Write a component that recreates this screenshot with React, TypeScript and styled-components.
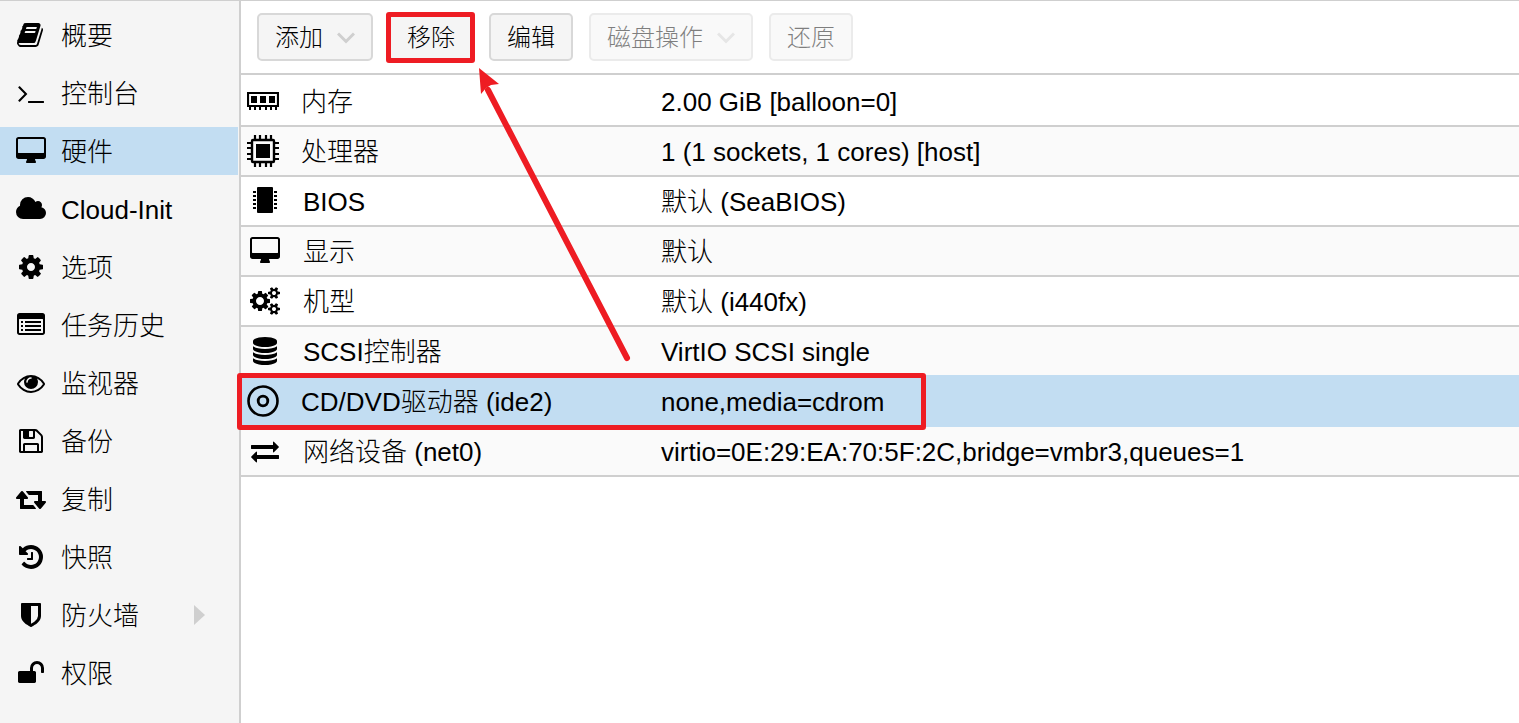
import React from "react";
import styled, { createGlobalStyle, css } from "styled-components";

const RED = "#ee1c23";
const LINE = "#cfcfcf";
const SELECTED = "#c2ddf2";

const GlobalStyle = createGlobalStyle`
  *, *::before, *::after { box-sizing: border-box; }
  body {
    margin: 0;
    background: #fff;
    color: #000;
    font-family: "Liberation Sans", "Noto Sans CJK SC", sans-serif;
    font-weight: 300;
    font-size: 26px;
    line-height: 32px;
  }
`;

const Page = styled.div`
  display: flex;
  min-height: 100vh;
  border-top: 1px solid ${LINE};
`;

const Sidebar = styled.nav`
  flex: 0 0 241px;
  padding: 10px 1px 10px 0;
  background: #f5f5f5;
  border-right: 2px solid ${LINE};
`;

const NavList = styled.ul`
  display: flex;
  flex-direction: column;
  gap: 10px;
  margin: 0;
  padding: 0;
  list-style: none;
`;

const NavLink = styled.a<{ $active?: boolean }>`
  display: flex;
  align-items: center;
  gap: 15px;
  height: 48px;
  padding: 0 33px 0 16px;
  color: inherit;
  text-decoration: none;
  background: ${(p) => (p.$active ? SELECTED : "transparent")};
`;

const NavIcon = styled.span`
  display: flex;
  justify-content: center;
  flex: 0 0 30px;
`;

const NavText = styled.span`
  flex: 1;
  padding-top: 2px;
`;

const Main = styled.main`
  position: relative;
  flex: 1;
  min-width: 0;
`;

const Toolbar = styled.div`
  display: flex;
  gap: 16px;
  padding: 12px 16px;
  border-bottom: 2px solid ${LINE};
`;

const ToolButton = styled.button`
  position: relative;
  display: flex;
  align-items: center;
  gap: 14px;
  height: 48px;
  padding: 2px 16px 0;
  border: 2px solid #d8d8d8;
  border-radius: 5px;
  background: #f5f5f5;
  color: #000;
  font: inherit;
  font-size: 24px;
  white-space: nowrap;
  &:disabled { opacity: 0.5; }
`;

const marker = css`
  position: absolute;
  z-index: 1;
  border: 5px solid ${RED};
  border-radius: 3px;
  pointer-events: none;
`;

const ButtonMarker = styled.span`
  ${marker}
  inset: -3px -4px -4px -5px;
`;

const RowMarker = styled.span`
  ${marker}
  top: -4px;
  left: -4px;
  width: 689px;
  height: 57px;
`;

const Arrow = styled.svg`
  position: absolute;
  left: 230px;
  top: 60px;
  pointer-events: none;
`;

const Grid = styled.table`
  width: 100%;
  padding-top: 2px;
  border-spacing: 0;
  table-layout: fixed;
`;

const NameColumn = styled.col`
  width: 420px;
`;

const Row = styled.tr<{ $selected?: boolean; $beforeSelected?: boolean }>`
  position: relative;
  &:nth-child(even) { background: #fafafa; }
  > * {
    height: 50px;
    padding: 0;
    border-bottom: 2px solid ${(p) => (p.$selected || p.$beforeSelected ? SELECTED : LINE)};
    font-weight: inherit;
    text-align: left;
    white-space: nowrap;
  }
  > td { padding-top: 2px; }
  && { ${(p) => p.$selected && `background: ${SELECTED};`} }
`;

const NameCell = styled.div`
  display: flex;
  align-items: center;
  gap: 20px;
  padding-left: 6px;
`;

const DeviceName = styled.span`
  padding-top: 2px;
`;

const DeviceIcon = styled.span<{ $custom?: boolean }>`
  display: flex;
  align-items: center;
  justify-content: ${(p) => (p.$custom ? "flex-start" : "center")};
  flex: 0 0 ${(p) => (p.$custom ? 34 : 36)}px;
`;

const glyphs = {
  book: { x: 0, w: 1792, d: "M1639 478q40 57 18 129l-275 906q-19 64-76.500 107.500t-122.500 43.500h-923q-77 0-148.500-53.500t-99.500-131.500q-24-67-2-127 0-4 3-27t4-37q1-8-3-21.500t-3-19.500q2-11 8-21t16.500-23.500 16.500-23.500q23-38 45-91.500t30-91.500q3-10 .5-30t-.5-28q3-11 17-28t17-23q21-36 42-92t25-90q1-9-2.500-32t.5-28q4-13 22-30.500t22-22.500q19-26 42.500-84.500t27.500-96.500q1-8-3-25.500t-2-26.500q2-8 9-18t18-23 17-21q8-12 16.500-30.500t15-35 16-36 19.500-32 26.500-23.500 36-11.500 47.500 5.500l-1 3q38-9 51-9h761q74 0 114 56t18 130l-274 906q-36 119-71.500 153.500t-128.500 34.500h-869q-27 0-38 15-11 16-1 43 24 70 144 70h923q29 0 56-15.500t35-41.500l300-987q7-22 5-57 38 15 59 43zm-1064 2q-4 13 2 22.500t20 9.500h608q13 0 25.500-9.500t16.500-22.500l21-64q4-13-2-22.500t-20-9.500h-608q-13 0-25.500 9.500t-16.500 22.500zm-83 256q-4 13 2 22.500t20 9.500h608q13 0 25.500-9.500t16.500-22.500l21-64q4-13-2-22.500t-20-9.500h-608q-13 0-25.500 9.500t-16.500 22.500z" },
  terminal: { x: 0, w: 1792, d: "M649 983l-466 466q-10 10-23 10t-23-10l-50-50q-10-10-10-23t10-23l393-393-393-393q-10-10-10-23t10-23l50-50q10-10 23-10t23 10l466 466q10 10 10 23t-10 23zm1079 457v64q0 14-9 23t-23 9h-960q-14 0-23-9t-9-23v-64q0-14 9-23t23-9h960q14 0 23 9t9 23z" },
  desktop: { x: -64, w: 1920, d: "M1728 992v-832q0-13-9.500-22.500t-22.500-9.500h-1600q-13 0-22.500 9.500t-9.500 22.500v832q0 13 9.500 22.500t22.500 9.500h1600q13 0 22.500-9.500t9.500-22.500zm128-832v1088q0 66-47 113t-113 47h-544q0 37 16 77.500t32 71 16 43.500q0 26-19 45t-45 19h-512q-26 0-45-19t-19-45q0-14 16-44t32-70 16-78h-544q-66 0-113-47t-47-113v-1088q0-66 47-113t113-47h1600q66 0 113 47t47 113z" },
  cloud: { x: 64, w: 1920, d: "M1984 1152q0 159-112.500 271.500t-271.500 112.500h-1088q-185 0-316.500-131.500t-131.500-316.500q0-132 71-241.500t187-163.500q-2-28-2-43 0-212 150-362t362-150q158 0 286.500 88t187.500 230q70-62 166-62 106 0 181 75t75 181q0 75-41 138 129 30 213 134.500t84 239.500z" },
  cog: { x: 0, w: 1792, d: "M1152 896q0-106-75-181t-181-75-181 75-75 181 75 181 181 75 181-75 75-181zm512-109v222q0 12-8 23t-20 13l-185 28q-19 54-39 91 35 50 107 138 10 12 10 25t-9 23q-27 37-99 108t-94 71q-12 0-26-9l-138-108q-44 23-91 38-16 136-29 186-7 28-36 28h-222q-14 0-24.500-8.500t-11.500-21.500l-28-184q-49-16-90-37l-141 107q-10 9-25 9-14 0-25-11-126-114-165-168-7-10-7-23 0-12 8-23 15-21 51-66.500t54-70.500q-27-50-41-99l-183-27q-13-2-21-12.500t-8-23.500v-222q0-12 8-23t19-13l186-28q14-46 39-92-40-57-107-138-10-12-10-24 0-10 9-23 26-36 98.500-107.500t94.500-71.500q13 0 26 10l138 107q44-23 91-38 16-136 29-186 7-28 36-28h222q14 0 24.500 8.500t11.500 21.500l28 184q49 16 90 37l142-107q9-9 24-9 13 0 25 10 129 119 165 170 7 8 7 22 0 12-8 23-15 21-51 66.500t-54 70.500q26 50 41 98l183 28q13 2 21 12.500t8 23.500z" },
  list: { x: 0, w: 1792, d: "M256 1152h128v128h-128zM256 896h128v128h-128zM256 640h128v128h-128zM512 1152h1024v128h-1024zM512 896h1024v128h-1024zM512 640h1024v128h-1024zM1664 1376v-832q0-13-9.500-22.500t-22.500-9.500h-1472q-13 0-22.500 9.500t-9.500 22.500v832q0 13 9.500 22.500t22.500 9.500h1472q13 0 22.500-9.500t9.500-22.500zm128-1088v1088q0 66-47 113t-113 47h-1472q-66 0-113-47t-47-113v-1088q0-66 47-113t113-47h1472q66 0 113 47t47 113z" },
  eye: { x: 0, w: 1792, d: "M1664 960q-152-236-381-353 61 104 61 225 0 185-131.500 316.500t-316.500 131.500-316.500-131.500-131.500-316.500q0-121 61-225-229 117-381 353 133 205 333.500 326.500t434.500 121.500 434.500-121.500 333.500-326.500zm-720-384q0-20-14-34t-34-14q-125 0-214.500 89.500t-89.500 214.500q0 20 14 34t34 14 34-14 14-34q0-86 61-147t147-61q20 0 34-14t14-34zm848 384q0 34-20 69-140 230-376.500 368.500t-499.500 138.500-499.500-139-376.500-368q-20-35-20-69t20-69q140-229 376.500-368t499.500-139 499.500 139 376.500 368q20 35 20 69z" },
  floppy: { x: 0, w: 1792, d: "M512 1536h768v-384h-768v384zm896 0h128v-896q0-14-10-38.500t-20-34.500l-281-281q-10-10-34-20t-39-10v416q0 40-28 68t-68 28h-576q-40 0-68-28t-28-68v-416h-128v1280h128v-416q0-40 28-68t68-28h832q40 0 68 28t28 68v416zm-384-928v-320q0-13-9.500-22.500t-22.500-9.500h-192q-13 0-22.500 9.500t-9.500 22.500v320q0 13 9.500 22.500t22.500 9.500h192q13 0 22.500-9.500t9.500-22.500zm640 32v928q0 40-28 68t-68 28h-1344q-40 0-68-28t-28-68v-1344q0-40 28-68t68-28h928q40 0 88 20t76 48l280 280q28 28 48 76t20 88z" },
  retweet: { x: 0, w: 1920, d: "M1280 1504q0 13-9.500 22.500t-22.500 9.500h-960q-8 0-13.500-2t-9-7-5.500-8-3-11.500-1-11.500v-600h-192q-26 0-45-19t-19-45q0-24 15-41l320-384q19-22 49-22t49 22l320 384q15 17 15 41 0 26-19 45t-45 19h-192v384h576q16 0 25 11l160 192q7 10 7 21zm640-416q0 24-15 41l-320 384q-20 23-49 23t-49-23l-320-384q-15-17-15-41 0-26 19-45t45-19h192v-384h-576q-16 0-25-12l-160-192q-7-9-7-20 0-13 9.500-22.500t22.500-9.500h960q8 0 13.500 2t9 7 5.500 8 3 11.500 1 11.500v600h192q26 0 45 19t19 45z" },
  history: { x: 0, w: 1792, d: "M1664 896q0 156-61 298t-164 245-245 164-298 61q-172 0-327-72.500t-264-204.500q-7-10-6.500-22.500t8.500-20.500l137-138q10-9 25-9 16 2 23 12 73 95 179 147t225 52q104 0 198.500-40.500t163.500-109.500 109.500-163.500 40.500-198.500-40.500-198.500-109.500-163.500-163.500-109.500-198.500-40.500q-98 0-188 35.500t-160 101.500l137 138q31 30 14 69-17 40-59 40h-448q-26 0-45-19t-19-45v-448q0-42 40-59 39-17 69 14l130 129q107-101 244.500-156.500t284.500-55.500q156 0 298 61t245 164 164 245 61 298zm-640-288v448q0 14-9 23t-23 9h-320q-14 0-23-9t-9-23v-64q0-14 9-23t23-9h224v-352q0-14 9-23t23-9h64q14 0 23 9t9 23z" },
  shield: { x: 0, w: 1792, d: "M1344 960v-640h-448v1137q119-63 213-137 235-184 235-360zm192-768v768q0 86-33.500 170.500t-83 150-118 127.500-126.500 103-121 77.500-89.500 49.500-42.500 20q-12 6-26 6t-26-6q-16-7-42.500-20t-89.500-49.500-121-77.500-126.500-103-118-127.500-83-150-33.500-170.500v-768q0-26 19-45t45-19h1152q26 0 45 19t19 45z" },
  unlock: { x: 0, w: 1792, d: "M1728 576v256q0 26-19 45t-45 19h-64q-26 0-45-19t-19-45v-256q0-106-75-181t-181-75-181 75-75 181v192h96q40 0 68 28t28 68v576q0 40-28 68t-68 28h-960q-40 0-68-28t-28-68v-576q0-40 28-68t68-28h672v-192q0-185 131.500-316.500t316.500-131.500 316.500 131.500 131.500 316.500z" },
  cogs: { x: -64, w: 1920, d: "M832 896q0-106-75-181t-181-75-181 75-75 181 75 181 181 75 181-75 75-181zm768 512q0-52-38-90t-90-38-90 38-38 90q0 53 37.500 90.500t90.500 37.500 90.500-37.500 37.500-90.500zm0-1024q0-52-38-90t-90-38-90 38-38 90q0 53 37.500 90.500t90.500 37.500 90.500-37.500 37.500-90.500zm-384 421v185q0 10-7 19.500t-16 10.500l-155 24q-11 35-32 76 34 48 90 115 7 11 7 20 0 12-7 19-23 30-82.500 89.500t-78.500 59.500q-11 0-21-7l-115-90q-37 19-77 31-11 108-23 155-7 24-30 24h-186q-11 0-20-7.500t-10-17.500l-23-153q-34-10-75-31l-118 89q-7 7-20 7-11 0-21-8-144-133-144-160 0-9 7-19 10-14 41-53t47-61q-23-44-35-82l-152-24q-10-1-17-9.500t-7-19.500v-185q0-10 7-19.500t16-10.500l155-24q11-35 32-76-34-48-90-115-7-11-7-20 0-12 7-20 22-30 82-89t79-59q11 0 21 7l115 90q34-18 77-32 11-108 23-154 7-24 30-24h186q11 0 20 7.500t10 17.500l23 153q34 10 75 31l118-89q8-7 20-7 11 0 21 8 144 133 144 160 0 8-7 19-12 16-42 54t-45 60q23 48 34 82l152 23q10 2 17 10.500t7 19.500zm640 533v140q0 16-149 31-12 27-30 52 51 113 51 138 0 4-4 7-122 71-124 71-8 0-46-47t-52-68q-20 2-30 2t-30-2q-14 21-52 68t-46 47q-2 0-124-71-4-3-4-7 0-25 51-138-18-25-30-52-149-15-149-31v-140q0-16 149-31 13-29 30-52-51-113-51-138 0-4 4-7 4-2 35-20t59-34 30-16q8 0 46 46.500t52 67.500q20-2 30-2t30 2q51-71 92-112l6-2q4 0 124 70 4 3 4 7 0 25-51 138 17 23 30 52 149 15 149 31zm0-1024v140q0 16-149 31-12 27-30 52 51 113 51 138 0 4-4 7-122 71-124 71-8 0-46-47t-52-68q-20 2-30 2t-30-2q-14 21-52 68t-46 47q-2 0-124-71-4-3-4-7 0-25 51-138-18-25-30-52-149-15-149-31v-140q0-16 149-31 13-29 30-52-51-113-51-138 0-4 4-7 4-2 35-20t59-34 30-16q8 0 46 46.500t52 67.500q20-2 30-2t30 2q51-71 92-112l6-2q4 0 124 70 4 3 4 7 0 25-51 138 17 23 30 52 149 15 149 31z" },
  database: { x: 0, w: 1792, d: "M896 768q237 0 443-43t325-127v170q0 69-103 128t-280 93.500-385 34.500-385-34.500-280-93.500-103-128v-170q119 84 325 127t443 43zm0 768q237 0 443-43t325-127v170q0 69-103 128t-280 93.500-385 34.500-385-34.500-280-93.500-103-128v-170q119 84 325 127t443 43zm0-384q237 0 443-43t325-127v170q0 69-103 128t-280 93.500-385 34.500-385-34.500-280-93.500-103-128v-170q119 84 325 127t443 43zm0-1152q208 0 385 34.500t280 93.500 103 128v128q0 69-103 128t-280 93.500-385 34.500-385-34.500-280-93.500-103-128v-128q0-69 103-128t280-93.500 385-34.500z" },
  exchange: { x: 0, w: 1792, d: "M1792 1184v192q0 13-9.500 22.500t-22.500 9.500h-1376v192q0 13-9.500 22.500t-22.500 9.500q-12 0-24-10l-319-320q-9-9-9-22 0-14 9-23l320-320q9-9 23-9 13 0 22.500 9.500t9.500 22.500v192h1376q13 0 22.500 9.500t9.500 22.500zm0-544q0 14-9 23l-320 320q-9 9-23 9-13 0-22.500-9.500t-9.500-22.500v-192h-1376q-13 0-22.500-9.500t-9.500-22.500v-192q0-13 9.500-22.500t22.500-9.500h1376v-192q0-14 9-23t23-9q12 0 24 10l319 319q9 9 9 23z" },
};

type GlyphName = keyof typeof glyphs;

const Glyph = ({ name }: { name: GlyphName }) => {
  const g = glyphs[name];
  return (
    <svg width={g.w / 64} height={28} viewBox={`${g.x} 0 ${g.w} 1792`} aria-hidden="true">
      <path d={g.d} />
    </svg>
  );
};

const MemoryIcon = () => (
  <svg width="32" height="32" viewBox="0 0 32 32" aria-hidden="true">
    <path d="M1 8h30v13H1z" fill="none" stroke="#000" strokeWidth="2.200" />
    <path d="M4 11h6v7H4zM13 11h6v7h-6zM22 11h6v7h-6zM2 22h2v3H2zM7 22h2v3H7zM12 22h2v3h-2zM18 22h2v3h-2zM23 22h2v3h-2zM28 22h2v3h-2z" />
  </svg>
);

const CpuIcon = () => (
  <svg width="32" height="32" viewBox="0 0 32 32" aria-hidden="true">
    <rect x="5" y="5" width="22" height="22" rx="1" fill="none" stroke="#000" strokeWidth="2.400" />
    <path d="M9 9h14v14H9z" />
    <path
      d="M8 0v4M13 0v4M19 0v4M24 0v4M8 28v4M13 28v4M19 28v4M24 28v4M0 8h4M0 13h4M0 19h4M0 24h4M28 8h4M28 13h4M28 19h4M28 24h4"
      stroke="#000"
      strokeWidth="2.200"
    />
  </svg>
);

const ChipIcon = () => (
  <svg width="24" height="28" viewBox="0 0 24 28" aria-hidden="true">
    <rect x="4" y="0" width="16" height="26" rx="1" />
    <path d="M1.500 4v18M22.500 4v18" stroke="#000" strokeWidth="3" strokeDasharray="2 2" />
  </svg>
);

const DiscIcon = () => (
  <svg width="32" height="32" viewBox="0 0 32 32" fill="none" stroke="#000" aria-hidden="true">
    <circle cx="16" cy="16" r="14.500" strokeWidth="2.600" />
    <circle cx="16" cy="16" r="4.800" strokeWidth="2.800" />
  </svg>
);

const Chevron = () => (
  <svg width="18" height="12" viewBox="0 0 18 12" fill="none" stroke="#cfcfcf" strokeWidth="3" aria-hidden="true">
    <path d="M1 1.500l8 8 8-8" />
  </svg>
);

const ExpandIcon = () => (
  <svg width="11" height="20" viewBox="0 0 11 20" fill="#cfcfcf" aria-hidden="true">
    <path d="M0 0l11 10L0 20z" />
  </svg>
);

const navItems: { icon: GlyphName; label: string; active?: boolean; expandable?: boolean }[] = [
  { icon: "book", label: "概要" },
  { icon: "terminal", label: "控制台" },
  { icon: "desktop", label: "硬件", active: true },
  { icon: "cloud", label: "Cloud-Init" },
  { icon: "cog", label: "选项" },
  { icon: "list", label: "任务历史" },
  { icon: "eye", label: "监视器" },
  { icon: "floppy", label: "备份" },
  { icon: "retweet", label: "复制" },
  { icon: "history", label: "快照" },
  { icon: "shield", label: "防火墙", expandable: true },
  { icon: "unlock", label: "权限" },
];

const devices: { icon: React.ReactNode; custom?: boolean; name: string; value: string }[] = [
  { icon: <MemoryIcon />, custom: true, name: "内存", value: "2.00 GiB [balloon=0]" },
  { icon: <CpuIcon />, custom: true, name: "处理器", value: "1 (1 sockets, 1 cores) [host]" },
  { icon: <ChipIcon />, name: "BIOS", value: "默认 (SeaBIOS)" },
  { icon: <Glyph name="desktop" />, name: "显示", value: "默认" },
  { icon: <Glyph name="cogs" />, name: "机型", value: "默认 (i440fx)" },
  { icon: <Glyph name="database" />, name: "SCSI控制器", value: "VirtIO SCSI single" },
  { icon: <DiscIcon />, custom: true, name: "CD/DVD驱动器 (ide2)", value: "none,media=cdrom" },
  { icon: <Glyph name="exchange" />, name: "网络设备 (net0)", value: "virtio=0E:29:EA:70:5F:2C,bridge=vmbr3,queues=1" },
];

const selectedIndex = 6;

export default function App() {
  return (
    <>
      <GlobalStyle />
      <Page lang="zh-CN">
        <Sidebar>
          <NavList>
            {navItems.map((item) => (
              <li key={item.label}>
                <NavLink href="#" $active={item.active} aria-current={item.active ? "page" : undefined}>
                  <NavIcon><Glyph name={item.icon} /></NavIcon>
                  <NavText>{item.label}</NavText>
                  {item.expandable && <ExpandIcon />}
                </NavLink>
              </li>
            ))}
          </NavList>
        </Sidebar>
        <Main>
          <Toolbar>
            <ToolButton type="button">添加<Chevron /></ToolButton>
            <ToolButton type="button">移除<ButtonMarker /></ToolButton>
            <ToolButton type="button">编辑</ToolButton>
            <ToolButton type="button" disabled>磁盘操作<Chevron /></ToolButton>
            <ToolButton type="button" disabled>还原</ToolButton>
          </Toolbar>
          <Grid>
            <colgroup><NameColumn /><col /></colgroup>
            <tbody>
              {devices.map((device, i) => (
                <Row key={device.name} $selected={i === selectedIndex} $beforeSelected={i === selectedIndex - 1}>
                  <th scope="row">
                    <NameCell>
                      <DeviceIcon $custom={device.custom}>{device.icon}</DeviceIcon>
                      <DeviceName>{device.name}</DeviceName>
                    </NameCell>
                    {i === selectedIndex && <RowMarker />}
                  </th>
                  <td>{device.value}</td>
                </Row>
              ))}
            </tbody>
          </Grid>
          <Arrow width="164" height="306" viewBox="0 0 164 306" aria-hidden="true">
            <path d="M156 297L17 29" stroke={RED} strokeWidth="6" strokeLinecap="round" />
            <path d="M8 7L28 23L20 24L15 27L10 33z" fill={RED} />
          </Arrow>
        </Main>
      </Page>
    </>
  );
}
